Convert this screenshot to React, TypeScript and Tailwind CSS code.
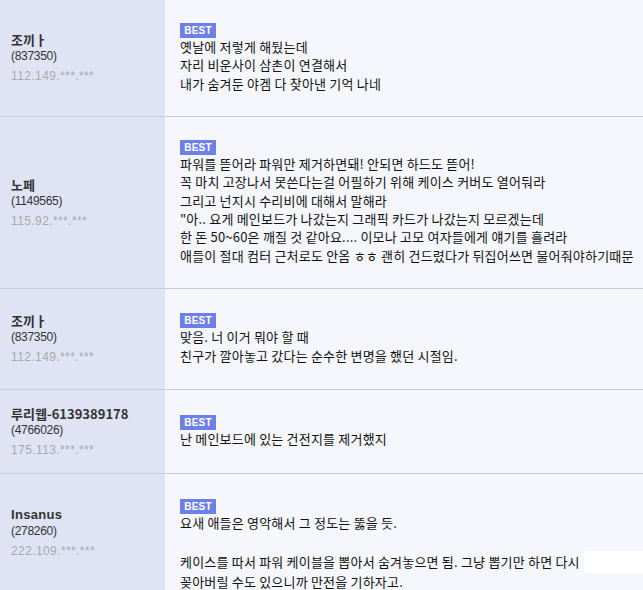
import React from "react";

type Comment = {
  name: string;
  id: string;
  ip: string;
  lines: string[];
  height?: string;
};

const comments: Comment[] = [
  {
    name: "조끼ㅏ",
    id: "(837350)",
    ip: "112.149.***.***",
    lines: ["옛날에 저렇게 해뒀는데", "자리 비운사이 삼촌이 연결해서", "내가 숨겨둔 야겜 다 찾아낸 기억 나네"],
    height: "h-[117px]",
  },
  {
    name: "노페",
    id: "(1149565)",
    ip: "115.92.***.***",
    lines: [
      "파워를 뜯어라 파워만 제거하면돼! 안되면 하드도 뜯어!",
      "꼭 마치 고장나서 못쓴다는걸 어필하기 위해 케이스 커버도 열어둬라",
      "그리고 넌지시 수리비에 대해서 말해라",
      "\"아.. 요게 메인보드가 나갔는지 그래픽 카드가 나갔는지 모르겠는데",
      "한 돈 50~60은 깨질 것 같아요.... 이모나 고모 여자들에게 얘기를 흘려라",
      "애들이 절대 컴터 근처로도 안옴 ㅎㅎ 괜히 건드렸다가 뒤집어쓰면 물어줘야하기때문",
    ],
    height: "h-[172px]",
  },
  {
    name: "조끼ㅏ",
    id: "(837350)",
    ip: "112.149.***.***",
    lines: ["맞음. 너 이거 뭐야 할 때", "친구가 깔아놓고 갔다는 순수한 변명을 했던 시절임."],
    height: "h-[101px]",
  },
  {
    name: "루리웹-6139389178",
    id: "(4766026)",
    ip: "175.113.***.***",
    lines: ["난 메인보드에 있는 건전지를 제거했지"],
    height: "h-[84px]",
  },
];

const Badge = () => (
  <span className="flex h-[15px] w-[36px] items-center justify-center bg-[#6c80e6] font-['Liberation_Sans',sans-serif] text-[10px] font-bold tracking-[0.2px] text-white">
    BEST
  </span>
);

const UserInfo = ({ c, nameFont }: { c: Comment; nameFont?: string }) => (
  <>
    <div
      className={`text-[13px] font-bold leading-[16px] text-[#333] ${
        nameFont ?? "font-['Noto_Sans_CJK_KR',sans-serif]"
      }`}
    >
      {c.name}
    </div>
    <div className="font-['Liberation_Sans',sans-serif] text-[12px] leading-[16px] tracking-[-0.3px] text-[#333]">
      {c.id}
    </div>
    <div className="mt-[4px] font-['Liberation_Sans',sans-serif] text-[12px] leading-[16px] tracking-[0.4px] text-[#aaa]">
      {c.ip}
    </div>
  </>
);

export default function App() {
  return (
    <div className="h-[590px] w-[643px] overflow-hidden bg-[#f5f7fd] font-['Noto_Sans_CJK_KR',sans-serif]">
      {comments.map((c, i) => (
        <div key={i} className={`flex border-b border-[#c8ccd6] ${c.height}`}>
          <div className="flex w-[165px] shrink-0 flex-col justify-center bg-[#dfe3f3] pl-[11px]">
            <UserInfo c={c} />
          </div>
          <div className="flex flex-1 flex-col justify-center pl-[15px]">
            <Badge />
            <div className="text-[13px] leading-[18.4px] tracking-[0.2px] text-[#111]">
              {c.lines.map((l, j) => (
                <div key={j} className="whitespace-nowrap">
                  {l}
                </div>
              ))}
            </div>
          </div>
        </div>
      ))}

      {/* last row, cut off by the window */}
      <div className="flex h-[140px]">
        <div className="flex w-[165px] shrink-0 flex-col bg-[#dfe3f3] pl-[11px] pt-[33px]">
          <UserInfo
            c={{ name: "Insanus", id: "(278260)", ip: "222.109.***.***", lines: [] }}
            nameFont="font-['Liberation_Sans',sans-serif] tracking-[0.3px]"
          />
        </div>
        <div className="flex flex-1 flex-col pl-[15px] pt-[25px]">
          <Badge />
          <div className="text-[13px] leading-[18.4px] tracking-[0.2px] text-[#111]">
            <div className="whitespace-nowrap">요새 애들은 영악해서 그 정도는 뚫을 듯.</div>
            <div className="h-[18.4px]" />
            <div className="flex items-center whitespace-nowrap">
              <span>케이스를 따서 파워 케이블을 뽑아서 숨겨놓으면 됨. 그냥 뽑기만 하면 다시</span>
              <span className="ml-[4px] h-[22px] flex-1 rounded-l-[3px] bg-white" />
            </div>
            <div className="whitespace-nowrap">꽂아버릴 수도 있으니까 만전을 기하자고.</div>
          </div>
        </div>
      </div>
    </div>
  );
}
